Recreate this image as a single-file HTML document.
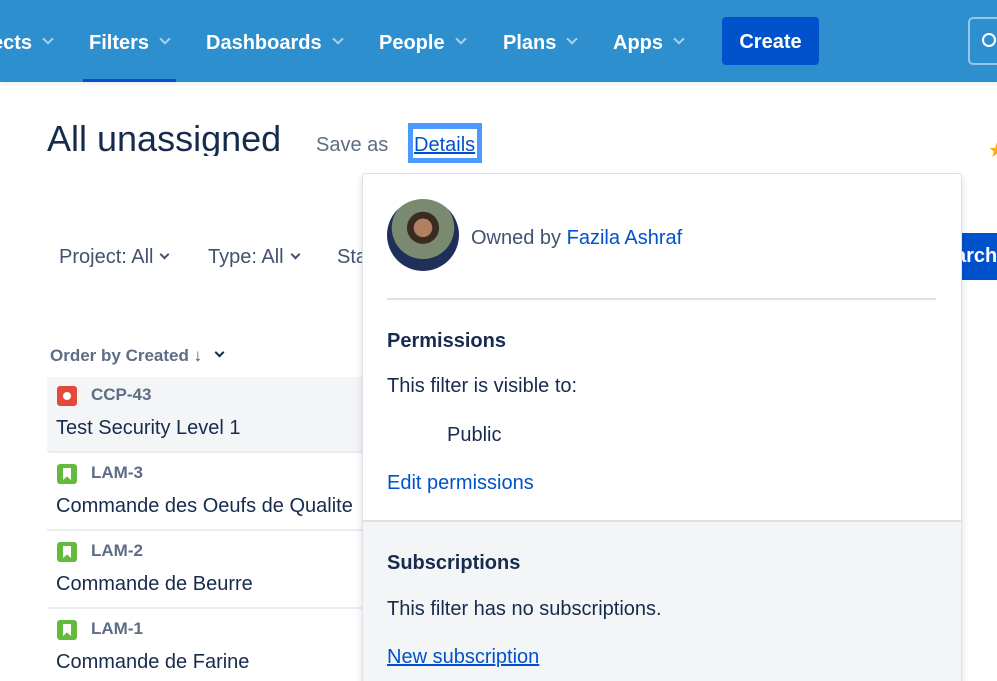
<!DOCTYPE html>
<html style="overflow:hidden"><head><style>
*{margin:0;padding:0;box-sizing:border-box}
body{width:997px;height:681px;overflow:hidden;background:#fff;font-family:"Liberation Sans",sans-serif;position:relative;color:#172b4d}
.nav{position:absolute;left:0;top:0;width:997px;height:82px;background:#2d8fcd;box-shadow:0 2px 4px rgba(0,0,0,.08)}
.ni{position:absolute;top:32px;color:#fff;font-weight:bold;font-size:20px}
.chev{display:inline-block;width:8px;height:8px;border-right:2px solid rgba(255,255,255,.6);border-bottom:2px solid rgba(255,255,255,.6);transform:rotate(45deg);margin-left:12px;position:relative;top:-6px}
.abs{position:absolute}
.dk{display:inline-block;width:7px;height:7px;border-right:2.5px solid #42526e;border-bottom:2.5px solid #42526e;transform:rotate(45deg);margin-left:8px;position:relative;top:-5px}
.card{position:absolute;left:47px;width:320px;height:76px;border-bottom:2px solid #ebecf0}
.key{position:absolute;left:44px;top:8px;font-size:17px;font-weight:bold;color:#5e6c84}
.sum{position:absolute;left:9px;top:40px;font-size:20px;color:#172b4d}
.ic{position:absolute;left:10px;top:9px;width:20px;height:20px;border-radius:3px}
.bm{position:absolute;left:6px;top:4px;width:8px;height:12px;background:#fff;clip-path:polygon(0 0,100% 0,100% 100%,50% 70%,0 100%)}
.pop{position:absolute;left:362px;top:173px;width:600px;height:520px;background:#fff;border:1px solid #dfe1e6;border-radius:3px;box-shadow:0 4px 8px rgba(9,30,66,.15)}
.t{position:absolute;font-size:20px;color:#172b4d}
</style></head><body>
<div class="nav">
<div class="ni" style="left:-8px">ects<span class="chev"></span></div>
<div class="ni" style="left:89px">Filters<span class="chev"></span></div>
<div class="abs" style="left:83px;top:79px;width:93px;height:3px;background:#0052cc"></div>
<div class="ni" style="left:206px">Dashboards<span class="chev"></span></div>
<div class="ni" style="left:379px">People<span class="chev"></span></div>
<div class="ni" style="left:503px">Plans<span class="chev"></span></div>
<div class="ni" style="left:613px">Apps<span class="chev"></span></div>
<div class="abs" style="left:722px;top:17px;width:97px;height:48px;background:#0052cc;border-radius:4px;color:#fff;font-weight:bold;font-size:20px;text-align:center;line-height:50px">Create</div>
<div class="abs" style="left:968px;top:17px;width:60px;height:48px;border:2px solid rgba(255,255,255,.5);border-radius:5px"><div style="position:absolute;left:12px;top:14px;width:14px;height:14px;border:2.5px solid #fff;border-radius:50%"></div></div>
</div>
<div class="abs" style="left:47px;top:118px;font-size:36px;color:#172b4d;height:38px;overflow:hidden;line-height:42px">All unassigned</div>
<div class="abs" style="left:316px;top:134px;font-size:20px;color:#5e6c84">Save as</div>
<div class="abs" style="left:408px;top:123px;width:74px;height:40px;background:#4c9aff"></div>
<div class="abs" style="left:413px;top:129px;width:64px;height:29px;background:#fff"></div>
<div class="abs" style="left:414px;top:134px;font-size:20px;color:#0052cc;text-decoration:underline">Details</div>
<div class="abs" style="left:988px;top:138px;color:#ffab00;font-size:20px">★</div>
<div class="abs" style="left:59px;top:246px;font-size:20px;color:#42526e">Project: All<span class="dk"></span></div>
<div class="abs" style="left:208px;top:246px;font-size:20px;color:#42526e">Type: All<span class="dk"></span></div>
<div class="abs" style="left:337px;top:246px;font-size:20px;color:#42526e">Sta</div>
<div class="abs" style="left:955px;top:233px;width:42px;height:47px;background:#0052cc;color:#fff;font-weight:bold;font-size:20px;line-height:47px;overflow:hidden;white-space:nowrap">arch</div>
<div class="abs" style="left:50px;top:346px;font-size:17px;font-weight:bold;color:#5e6c84">Order by Created <span style="color:#42526e">↓</span><span class="dk" style="border-color:#172b4d;margin-left:14px"></span></div>
<div class="card" style="top:377px;background:#f4f5f7;border-radius:3px"><div class="ic" style="background:#e5493a"><div style="position:absolute;left:6px;top:6px;width:8px;height:8px;border-radius:50%;background:#fff"></div></div><div class="key">CCP-43</div><div class="sum">Test Security Level 1</div></div>
<div class="card" style="top:455px"><div class="ic" style="background:#63ba3c"><div class="bm"></div></div><div class="key">LAM-3</div><div class="sum" style="white-space:nowrap">Commande des Oeufs de Qualite</div></div>
<div class="card" style="top:533px"><div class="ic" style="background:#63ba3c"><div class="bm"></div></div><div class="key">LAM-2</div><div class="sum">Commande de Beurre</div></div>
<div class="card" style="top:611px"><div class="ic" style="background:#63ba3c"><div class="bm"></div></div><div class="key">LAM-1</div><div class="sum">Commande de Farine</div></div>
<div class="pop">
<div class="abs" style="left:24px;top:25px;width:72px;height:72px;border-radius:50%;background:radial-gradient(circle at 50% 40%,#b08060 0 16%,#3a2a22 17% 28%,#7a8a70 29% 55%,#1e2f5a 56%)"></div>
<div class="t" style="left:108px;top:53px;color:#42526e">Owned by <span style="color:#0052cc">Fazila Ashraf</span></div>
<div class="abs" style="left:24px;top:124px;width:549px;height:2px;background:#dfe1e6"></div>
<div class="t" style="left:24px;top:156px;font-weight:bold">Permissions</div>
<div class="t" style="left:24px;top:201px">This filter is visible to:</div>
<div class="t" style="left:84px;top:250px">Public</div>
<div class="t" style="left:24px;top:298px;color:#0052cc">Edit permissions</div>
<div class="abs" style="left:0;top:346px;width:598px;height:180px;background:#f4f5f7;border-top:2px solid #dfe1e6"></div>
<div class="t" style="left:24px;top:378px;font-weight:bold">Subscriptions</div>
<div class="t" style="left:24px;top:424px">This filter has no subscriptions.</div>
<div class="t" style="left:24px;top:472px;color:#0052cc;text-decoration:underline">New subscription</div>
</div>
</body></html>
